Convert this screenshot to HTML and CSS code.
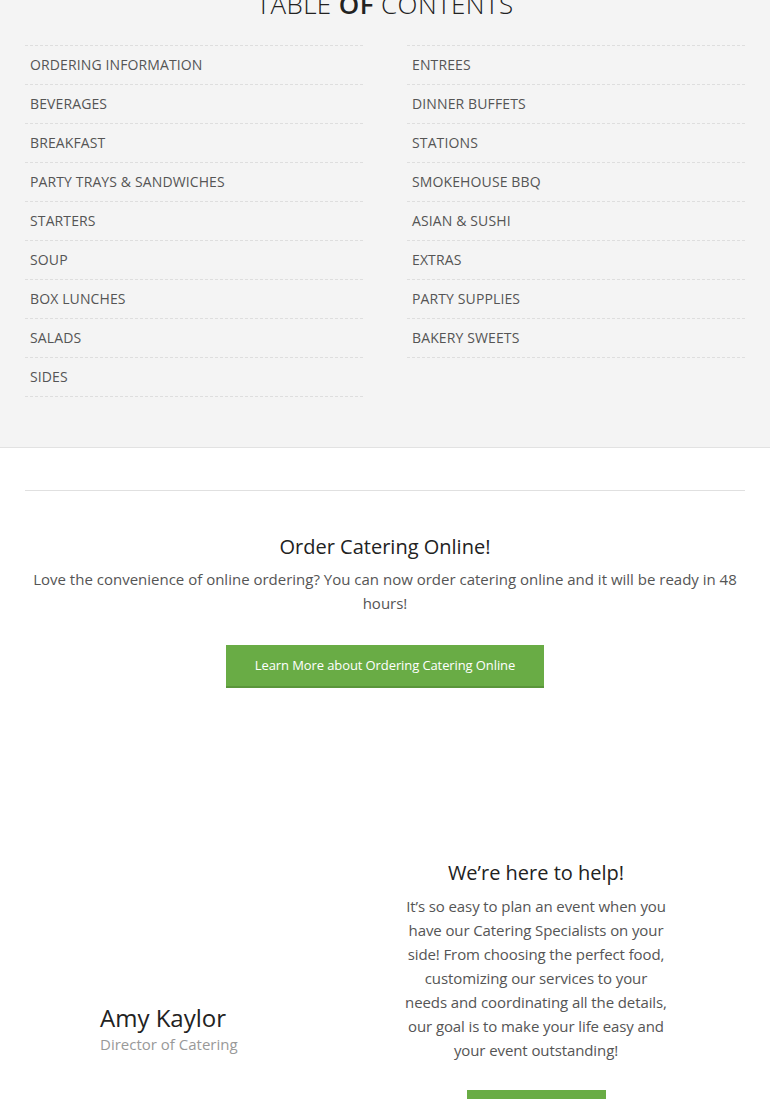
FILE: index.html
```html
<!DOCTYPE html>
<html>
<head>
<meta charset="utf-8">
<link rel="stylesheet" href="styles.css">
</head>
<body>
<section class="toc">
  <h2 class="toc-title">TABLE <b>OF</b> CONTENTS</h2>
  <div class="toc-cols">
    <ul class="toc-list">
      <li>ORDERING INFORMATION</li>
      <li>BEVERAGES</li>
      <li>BREAKFAST</li>
      <li>PARTY TRAYS &amp; SANDWICHES</li>
      <li>STARTERS</li>
      <li>SOUP</li>
      <li>BOX LUNCHES</li>
      <li>SALADS</li>
      <li>SIDES</li>
    </ul>
    <ul class="toc-list">
      <li>ENTREES</li>
      <li>DINNER BUFFETS</li>
      <li>STATIONS</li>
      <li>SMOKEHOUSE BBQ</li>
      <li>ASIAN &amp; SUSHI</li>
      <li>EXTRAS</li>
      <li>PARTY SUPPLIES</li>
      <li>BAKERY SWEETS</li>
    </ul>
  </div>
</section>
<section class="main">
  <hr class="rule">
  <div class="online">
    <h3 class="sub-title">Order Catering Online!</h3>
    <p class="text">Love the convenience of online ordering? You can now order catering online and it will be ready in 48 hours!</p>
    <a class="btn">Learn More about Ordering Catering Online</a>
  </div>
  <div class="help">
    <div class="person">
      <div class="name">Amy Kaylor</div>
      <div class="role">Director of Catering</div>
    </div>
    <div class="help-copy">
      <h3 class="sub-title">We’re here to help!</h3>
      <p class="text">It’s so easy to plan an event when you have our Catering Specialists on your side! From choosing the perfect food, customizing our services to your needs and coordinating all the details, our goal is to make your life easy and your event outstanding!</p>
      <a class="btn btn-small">&nbsp;</a>
    </div>
  </div>
</section>
</body>
</html>
```
FILE: styles.css
```css
html, body {
  margin: 0;
  padding: 0;
  background: #fff;
  font-family: "Open Sans", "Liberation Sans", sans-serif;
  color: #555;
  overflow: hidden;
}

.toc {
  background: #f4f4f4;
  border-bottom: 1px solid #e2e2e2;
  padding: 0 25px 50px;
}

.toc-title {
  margin: -14px 0 0;
  height: 59px;
  text-align: center;
  font-size: 26px;
  font-weight: 300;
  letter-spacing: 0.4px;
  color: #222;
  line-height: 36px;
}
.toc-title b { font-weight: 600; }

.toc-cols {
  display: flex;
  gap: 44px;
}

.toc-list {
  list-style: none;
  margin: 0;
  padding: 0;
  flex: 1;
  border-top: 1px dashed #dedede;
}

.toc-list li {
  height: 38px;
  line-height: 38px;
  padding-left: 5px;
  font-size: 14px;
  letter-spacing: 0.12px;
  color: #555;
  border-bottom: 1px dashed #dedede;
}

.main {
  padding: 42px 25px 0;
}

.rule {
  border: 0;
  border-top: 1px solid #e0e0e0;
  margin: 0;
}

.online {
  text-align: center;
  padding-top: 42px;
}

.sub-title {
  margin: 0;
  font-size: 20px;
  font-weight: 400;
  color: #222;
  line-height: 28px;
}

.text {
  margin: 6px 0 0;
  font-size: 15px;
  line-height: 24px;
  color: #555;
}

.btn {
  display: inline-block;
  margin-top: 30px;
  background: #69ac45;
  border-bottom: 2px solid #5a963a;
  color: #fff;
  font-size: 13px;
  letter-spacing: -0.1px;
  line-height: 41px;
  padding: 0 29px;
}

.help {
  display: flex;
  margin-top: 171px;
}

.person {
  width: 304px;
  padding-left: 75px;
  display: flex;
  flex-direction: column;
  justify-content: flex-end;
  padding-bottom: 78px;
}

.name {
  font-size: 24px;
  color: #222;
  line-height: 30px;
}

.role {
  font-size: 15px;
  color: #999;
  line-height: 22px;
}

.help-copy {
  width: 264px;
  text-align: center;
}

.help-copy .text {
  margin-top: 7px;
  letter-spacing: -0.1px;
}

.btn-small {
  width: 81px;
  margin-top: 28px;
}
```
